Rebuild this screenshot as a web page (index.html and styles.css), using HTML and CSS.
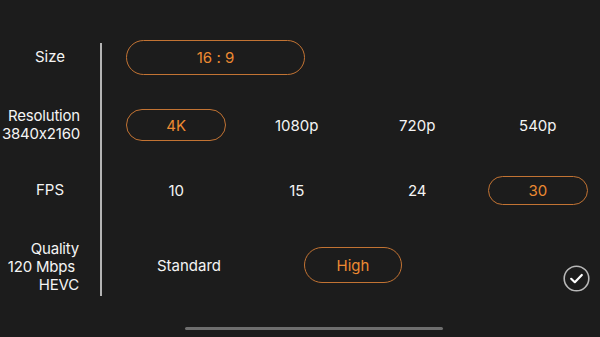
FILE: index.html
```html
<!DOCTYPE html>
<html>
<head>
<meta charset="utf-8">
<link rel="stylesheet" href="styles.css">
</head>
<body>
<div class="screen">
  <div class="panel">
    <div class="divider"></div>

    <div class="label r1">Size</div>
    <div class="opts r1 four">
      <div class="pill wide">16 : 9</div>
    </div>

    <div class="label multi r2"><span>Resolution</span><span>3840x2160</span></div>
    <div class="opts r2 four">
      <div class="pill res">4K</div>
      <div class="opt">1080p</div>
      <div class="opt">720p</div>
      <div class="opt">540p</div>
    </div>

    <div class="label r3">FPS</div>
    <div class="opts r3 four">
      <div class="opt">10</div>
      <div class="opt">15</div>
      <div class="opt">24</div>
      <div class="pill fps">30</div>
    </div>

    <div class="label multi q r4"><span>Quality</span><span class="mbps">120 Mbps</span><span>HEVC</span></div>
    <div class="opts r4 quality">
      <div class="opt">Standard</div>
      <div class="pill hi">High</div>
      <div class="done">
        <svg width="27" height="27" viewBox="0 0 27 27">
          <circle cx="13.5" cy="13.5" r="12.3" fill="none" stroke="#b8b8b8" stroke-width="1.6"/>
          <path d="M8.2 13.8 L11.8 17.2 L18.8 10" fill="none" stroke="#ffffff" stroke-width="2.2" stroke-linecap="round" stroke-linejoin="round"/>
        </svg>
      </div>
    </div>
  </div>
  <div class="home"></div>
</div>
</body>
</html>
```
FILE: styles.css
```css
* { box-sizing: border-box; }
html, body {
  margin: 0;
  padding: 0;
  background: #1c1c1c;
}
body {
  width: 600px;
  height: 337px;
  overflow: hidden;
  font-family: Inter, "Liberation Sans", sans-serif;
  font-size: 15px;
  font-feature-settings: "calt" 0;
  color: #f4f4f4;
}
.screen {
  width: 600px;
  height: 337px;
  padding-top: 22px;
}
.panel {
  display: grid;
  grid-template-columns: 100px 2px 1fr;
  grid-template-rows: 70px 66px 64px 86px;
}
.divider {
  grid-column: 2;
  grid-row: 1 / 5;
  background: #b4b4b4;
  margin-top: 21px;
  margin-bottom: 12px;
}
.label {
  grid-column: 1;
  display: flex;
  flex-direction: column;
  justify-content: center;
  align-items: center;
  text-align: center;
  line-height: 18px;
}
.label.multi {
  align-items: flex-end;
  text-align: right;
  padding-right: 20px;
  letter-spacing: -0.2px;
}
.label.q {
  padding-right: 21px;
  padding-top: 4px;
}
.label .mbps { padding-right: 4px; }
.r1 { grid-row: 1; }
.r2 { grid-row: 2; }
.r3 { grid-row: 3; }
.r4 { grid-row: 4; }
.opts {
  grid-column: 3;
  display: grid;
  align-items: center;
}
.four {
  grid-template-columns: repeat(4, 1fr);
  padding-left: 14px;
  padding-right: 2px;
}
.quality {
  grid-template-columns: 164px 164px 1fr;
  padding-left: 5px;
}
.opt {
  text-align: center;
}
.pill {
  border: 1.6px solid #c27333;
  color: #ec8a32;
  display: flex;
  align-items: center;
  justify-content: center;
  justify-self: center;
  width: 100px;
}
.pill.wide {
  width: 179px;
  height: 35px;
  border-radius: 18px;
  justify-self: start;
  margin-left: 10px;
}
.pill.res {
  height: 32px;
  border-radius: 16px;
}
.pill.fps {
  height: 29px;
  border-radius: 15px;
}
.pill.hi {
  width: 98px;
  height: 36px;
  border-radius: 18px;
}
.done {
  justify-self: end;
  align-self: start;
  margin-top: 43px;
  margin-right: 10px;
  width: 27px;
  height: 27px;
}
.done svg { display: block; }
.home {
  width: 258px;
  height: 3px;
  border-radius: 2px;
  background: #6e6e6e;
  margin-top: 19px;
  margin-left: 185px;
}
```
